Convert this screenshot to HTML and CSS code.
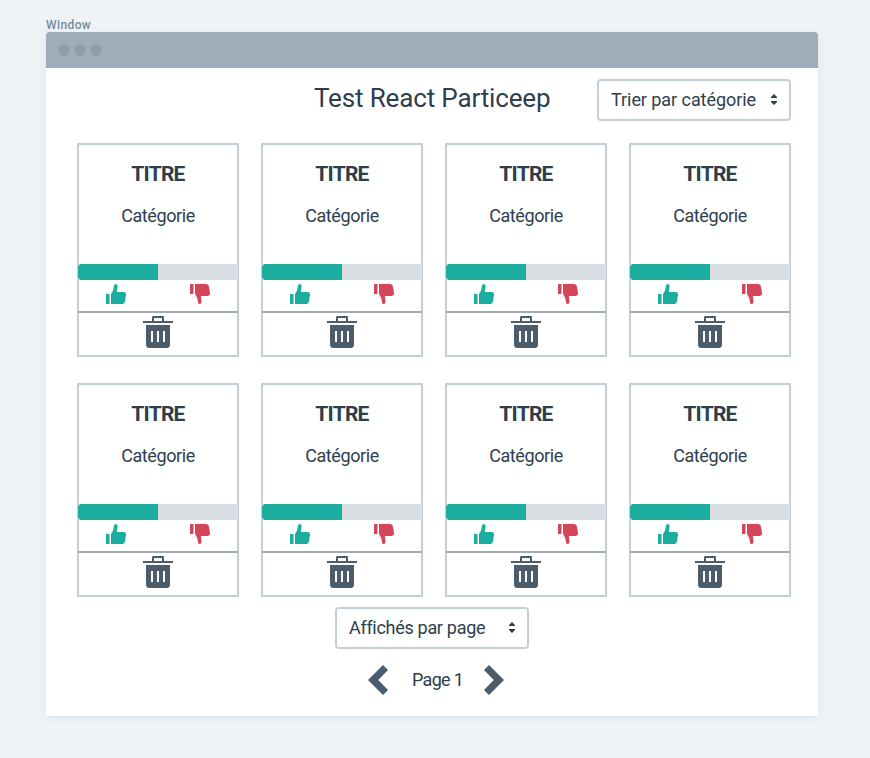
FILE: index.html
```
<!DOCTYPE html>
<html lang="fr">
<head>
<meta charset="utf-8">
<title>Test React Particeep</title>
<link rel="stylesheet" href="styles.css">
</head>
<body>
<svg class="sprite" width="0" height="0" aria-hidden="true">
  <symbol id="thumb" viewBox="0 0 20 20"><path d="M0 10h3.500v10H0zM5 20V10.200L7.200 6L8 1.500Q8.300 0 9.500 0C11.200 0 11.800 1.600 11.500 3.600L10.800 8H17.500Q20.200 8 20 11L19 17.200Q18.400 20 15.800 20z"/></symbol>
  <symbol id="trash" viewBox="0 0 30 32"><path fill-rule="evenodd" d="M0 5h9V1.200Q9 0 10.200 0h9.600Q21 0 21 1.200V5h9v2H0zM11 2v3h8V2zM3 9h24v19.500Q27 32 23.500 32h-17Q3 32 3 28.500zM8 15v11h2V15zM14 15v11h2V15zM20 15v11h2V15z"/></symbol>
  <symbol id="updown" viewBox="0 0 6 11"><path d="M3 0 6 3V4H0V3zM0 7h6v1L3 11 0 8z"/></symbol>
  <symbol id="chevron" viewBox="0 0 20 30"><path d="M15 0 20 5 10.200 15 20 25 15 30 0 15z"/></symbol>
</svg>
<div class="label">Window</div>
<main class="window">
  <div class="bar"><i></i><i></i><i></i></div>
  <header>
    <h1>Test React Particeep</h1>
    <div class="select sort"><span>Trier par catégorie</span><svg><use href="#updown"/></svg></div>
  </header>
  <section class="grid" id="grid"></section>
  <footer>
    <div class="select per-page"><span>Affichés par page</span><svg><use href="#updown"/></svg></div>
    <nav><svg><use href="#chevron"/></svg><span>Page 1</span><svg class="next"><use href="#chevron"/></svg></nav>
  </footer>
</main>
<script src="cards.js"></script>
</body>
</html>
```
FILE: styles.css
```
* { box-sizing: border-box; }
body { margin: 0; height: 758px; padding: 17px 52px 0 46px; background: #eff3f6; color: #2d3e4c; font-family: Roboto, sans-serif; overflow: hidden; }
.sprite { position: absolute; }
svg { display: block; fill: #4b5d6d; }
.label { height: 15px; padding-top: 1px; font-size: 12px; line-height: 15px; font-weight: 500; letter-spacing: .4px; color: #778b9c; }
.window { height: 684px; background: #fff; border-radius: 4px 4px 0 0; box-shadow: 0 2px 8px rgba(60, 85, 110, .09); }
.bar { height: 36px; padding-left: 12px; display: flex; align-items: center; gap: 4px; background: #9eadb9; border-radius: 4px 4px 0 0; }
.bar i { width: 12px; height: 12px; border-radius: 50%; background: #8e9eab; }
header { height: 75px; padding: 11px 27px 0 31px; display: grid; grid-template-columns: 237px 238px 1fr; align-items: start; }
h1 { grid-column: 2; margin: 2px 0 0; font-size: 26px; line-height: 34px; font-weight: 400; letter-spacing: -.15px; white-space: nowrap; }
.select { width: 194px; height: 42px; padding: 0 12px 1px; border: 2px solid #c3ced9; border-radius: 4px; display: flex; align-items: center; justify-content: space-between; font-size: 18px; letter-spacing: -.06px; white-space: nowrap; }
.select span { margin-bottom: 1px; }
.select svg { width: 6px; height: 11px; fill: #2d3e4c; }
.sort { justify-self: end; }
.per-page { letter-spacing: -.3px; }
.grid { padding: 0 27px 0 31px; display: grid; grid-template-columns: repeat(4, 162px); gap: 26px 22px; }
.card { height: 214px; border: 2px solid #c3ced9; display: flex; flex-direction: column; align-items: center; }
h2 { margin: 16px 0 0; font-size: 21px; line-height: 26px; font-weight: 700; letter-spacing: -.75px; }
.category { margin: 17px 0 0; font-size: 18px; line-height: 24px; letter-spacing: -.4px; }
.gauge { margin-top: 36px; width: 160px; height: 16px; flex: none; background: #d9dee5; border-radius: 4px; overflow: hidden; }
.gauge div { height: 16px; background: #1bae9f; }
.votes { width: 160px; height: 33px; padding: 4px 28px 0; display: flex; justify-content: space-between; border-bottom: 2px solid #9eadb9; }
.votes svg { width: 20px; height: 20px; fill: #1bae9f; }
.votes .down { fill: #d3455b; transform: scaleY(-1); }
.trash { margin-top: 3px; width: 30px; height: 32px; }
footer { padding-top: 10px; display: flex; flex-direction: column; align-items: center; }
nav { margin: 16px 0 0 8px; width: 136px; display: flex; align-items: center; font-size: 18px; }
nav span { margin: 0 auto 2px 24px; letter-spacing: -.7px; }
nav svg { width: 20px; height: 30px; }
.next { transform: scaleX(-1); }
```
FILE: cards.js
```
const votes = Array(8).fill({ title: 'TITRE', category: 'Catégorie', likes: 50 });
document.getElementById('grid').innerHTML = votes.map(v => `
  <article class="card">
    <h2>${v.title}</h2>
    <p class="category">${v.category}</p>
    <div class="gauge"><div style="width:${v.likes}%"></div></div>
    <div class="votes"><svg><use href="#thumb"/></svg><svg class="down"><use href="#thumb"/></svg></div>
    <svg class="trash"><use href="#trash"/></svg>
  </article>`).join('');
```
